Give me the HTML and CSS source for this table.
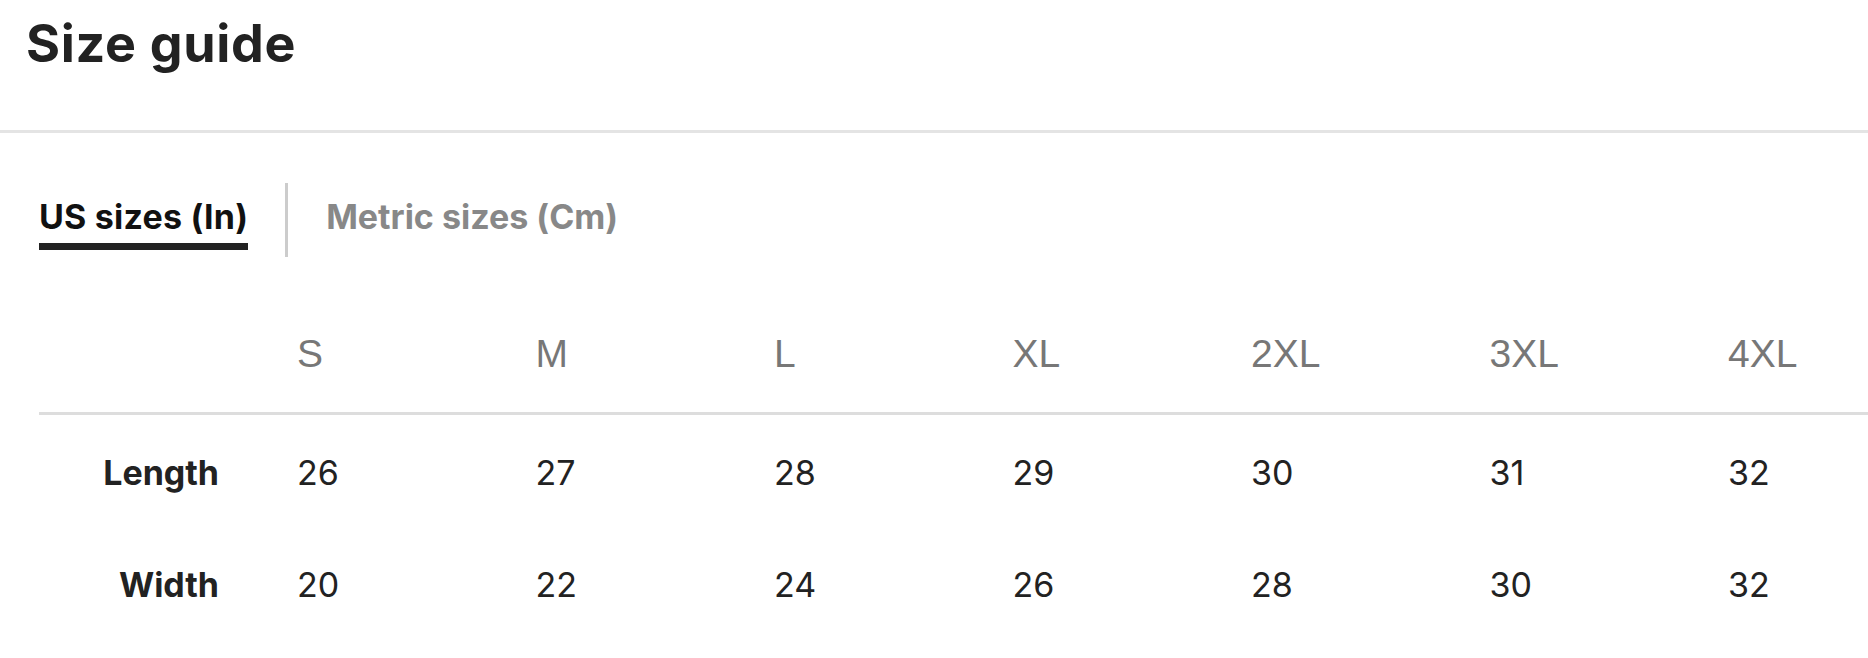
FILE: index.html
```html
<!DOCTYPE html>
<html lang="en">
<head>
    <meta charset="UTF-8">
    <meta name="viewport" content="width=device-width, initial-scale=1.0">
    <title>Size guide</title>
    <link rel="stylesheet" href="styles.css">
</head>
<body>
    <h1 class="page-title">Size guide</h1>

    <div class="tab-list">
        <div class="tab active">US sizes (In)</div>
        <div class="tab-divider"></div>
        <div class="tab">Metric sizes (Cm)</div>
    </div>

    <div class="size-table">
        <div class="size-row head">
            <div class="row-label"></div>
            <div class="size-name">S</div>
            <div class="size-name">M</div>
            <div class="size-name">L</div>
            <div class="size-name">XL</div>
            <div class="size-name">2XL</div>
            <div class="size-name">3XL</div>
            <div class="size-name">4XL</div>
        </div>
        <div class="size-row">
            <div class="row-label">Length</div>
            <div class="size-value">26</div>
            <div class="size-value">27</div>
            <div class="size-value">28</div>
            <div class="size-value">29</div>
            <div class="size-value">30</div>
            <div class="size-value">31</div>
            <div class="size-value">32</div>
        </div>
        <div class="size-row">
            <div class="row-label">Width</div>
            <div class="size-value">20</div>
            <div class="size-value">22</div>
            <div class="size-value">24</div>
            <div class="size-value">26</div>
            <div class="size-value">28</div>
            <div class="size-value">30</div>
            <div class="size-value">32</div>
        </div>
    </div>
</body>
</html>
```

FILE: styles.css
```css
body {
    font-family: Inter, Lato, Arial, sans-serif;
    margin: 0;
    color: #222;
    background: #fff;
}
.page-title {
    margin: 0;
    padding: 12px 0 54px 26px;
    font-size: 52px;
    line-height: 64px;
    font-weight: 700;
    letter-spacing: 0.7px;
    color: #222;
    border-bottom: 3px solid #e4e4e4;
}
.tab-list {
    display: flex;
    height: 74px;
    margin: 50px 0 0 39px;
}
.tab {
    align-self: flex-start;
    padding: 13px 0 5px;
    font-size: 34px;
    line-height: 42px;
    font-weight: 700;
    color: #888;
    border-bottom: 7px solid transparent;
}
.tab.active {
    color: #111;
    letter-spacing: 0.2px;
    border-bottom-color: #222;
}
.tab-divider {
    width: 3px;
    background-color: #ccc;
    margin: 0 38px 0 37px;
}
.size-table {
    margin: 74px 0 0 39px;
}
.size-row {
    display: grid;
    grid-template-columns: 258px repeat(6, 238.5px) minmax(0, 1fr);
    padding: 37px 0 33px;
    font-size: 34px;
    line-height: 42px;
}
.size-row.head {
    padding: 0 0 35px;
    border-bottom: 3px solid #ddd;
}
.row-label {
    text-align: right;
    padding-right: 78px;
    font-weight: 700;
}
.size-name {
    font-family: "Liberation Sans", Arial, sans-serif;
    font-size: 39px;
    line-height: 46px;
    color: #777;
}
.size-value {
    color: #222;
}
```
